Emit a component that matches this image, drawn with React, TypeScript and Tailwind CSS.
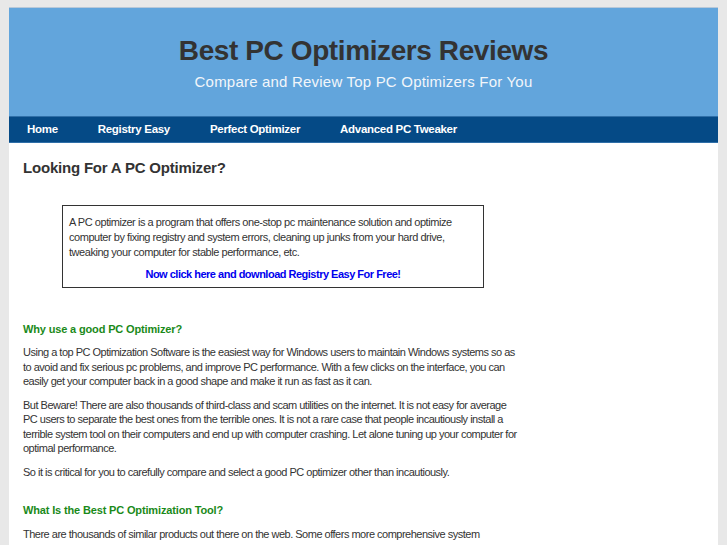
const navItems = ["Home", "Registry Easy", "Perfect Optimizer", "Advanced PC Tweaker"];

export default function App() {
  return (
    <div className="min-h-screen bg-[#e8e8e8] px-[9px] pt-[7px] font-['Liberation_Sans',Arial,sans-serif] text-[#333]">
      <div className="w-[709px] bg-white">
        {/* header */}
        <div className="flex h-[109px] flex-col items-center border-t border-[#b8c8d8] bg-[#62a5dc] pt-[26px]">
          <h1 className="text-[28px] font-bold leading-[34px] tracking-[-0.4px] text-[#333]">Best PC Optimizers Reviews</h1>
          <p className="mt-[5px] text-[15px] leading-[18px] tracking-[0.2px] text-[#f2f6fa]">
            Compare and Review Top PC Optimizers For You
          </p>
        </div>

        {/* nav */}
        <ul className="flex h-[27px] items-center gap-[40px] border-y border-[#2f6fa8] bg-[#054a86] pl-[18px] text-[11.5px] font-bold tracking-[-0.3px] text-white">
          {navItems.map((item) => (
            <li key={item}>{item}</li>
          ))}
        </ul>

        {/* content */}
        <div className="w-[528px] px-[14px] pb-8 pt-[15px] text-[11px] leading-[14.5px] tracking-[-0.5px]">
          <h2 className="text-[15px] font-bold leading-[19px] tracking-[-0.2px] text-[#333]">Looking For A PC Optimizer?</h2>

          <div className="ml-[39px] mt-[28px] w-[422px] border border-[#333] px-[6px] pb-[5px] pt-[9px] leading-[15px] tracking-[-0.46px]">
            <p>
              A PC optimizer is a program that offers one-stop pc maintenance solution and optimize computer by fixing
              registry and system errors, cleaning up junks from your hard drive, tweaking your computer for stable
              performance, etc.
            </p>
            <p className="mt-[7px] text-center font-bold tracking-[-0.5px] text-[#0000ee]">
              Now click here and download Registry Easy For Free!
            </p>
          </div>

          <h3 className="mt-[34px] text-[11px] font-bold leading-[15px] tracking-[-0.15px] text-[#1a8a1a]">
            Why use a good PC Optimizer?
          </h3>
          <p className="mt-[8px]">
            Using a top PC Optimization Software is the easiest way for Windows users to maintain Windows systems so as
            to avoid and fix serious pc problems, and improve PC performance. With a few clicks on the interface, you can
            easily get your computer back in a good shape and make it run as fast as it can.
          </p>
          <p className="mt-[9px]">
            But Beware! There are also thousands of third-class and scam utilities on the internet. It is not easy for
            average PC users to separate the best ones from the terrible ones. It is not a rare case that people
            incautiously install a terrible system tool on their computers and end up with computer crashing. Let alone
            tuning up your computer for optimal performance.
          </p>
          <p className="mt-[9px]">
            So it is critical for you to carefully compare and select a good PC optimizer other than incautiously.
          </p>

          <h3 className="mt-[24px] text-[11px] font-bold leading-[15px] tracking-[-0.15px] text-[#1a8a1a]">
            What Is the Best PC Optimization Tool?
          </h3>
          <p className="mt-[9px]">
            There are thousands of similar products out there on the web. Some offers more comprehensive system
            maintenance utilities and functions. And the effective power of different software may be quite different
            from each other, too.
          </p>
        </div>
      </div>
    </div>
  );
}
